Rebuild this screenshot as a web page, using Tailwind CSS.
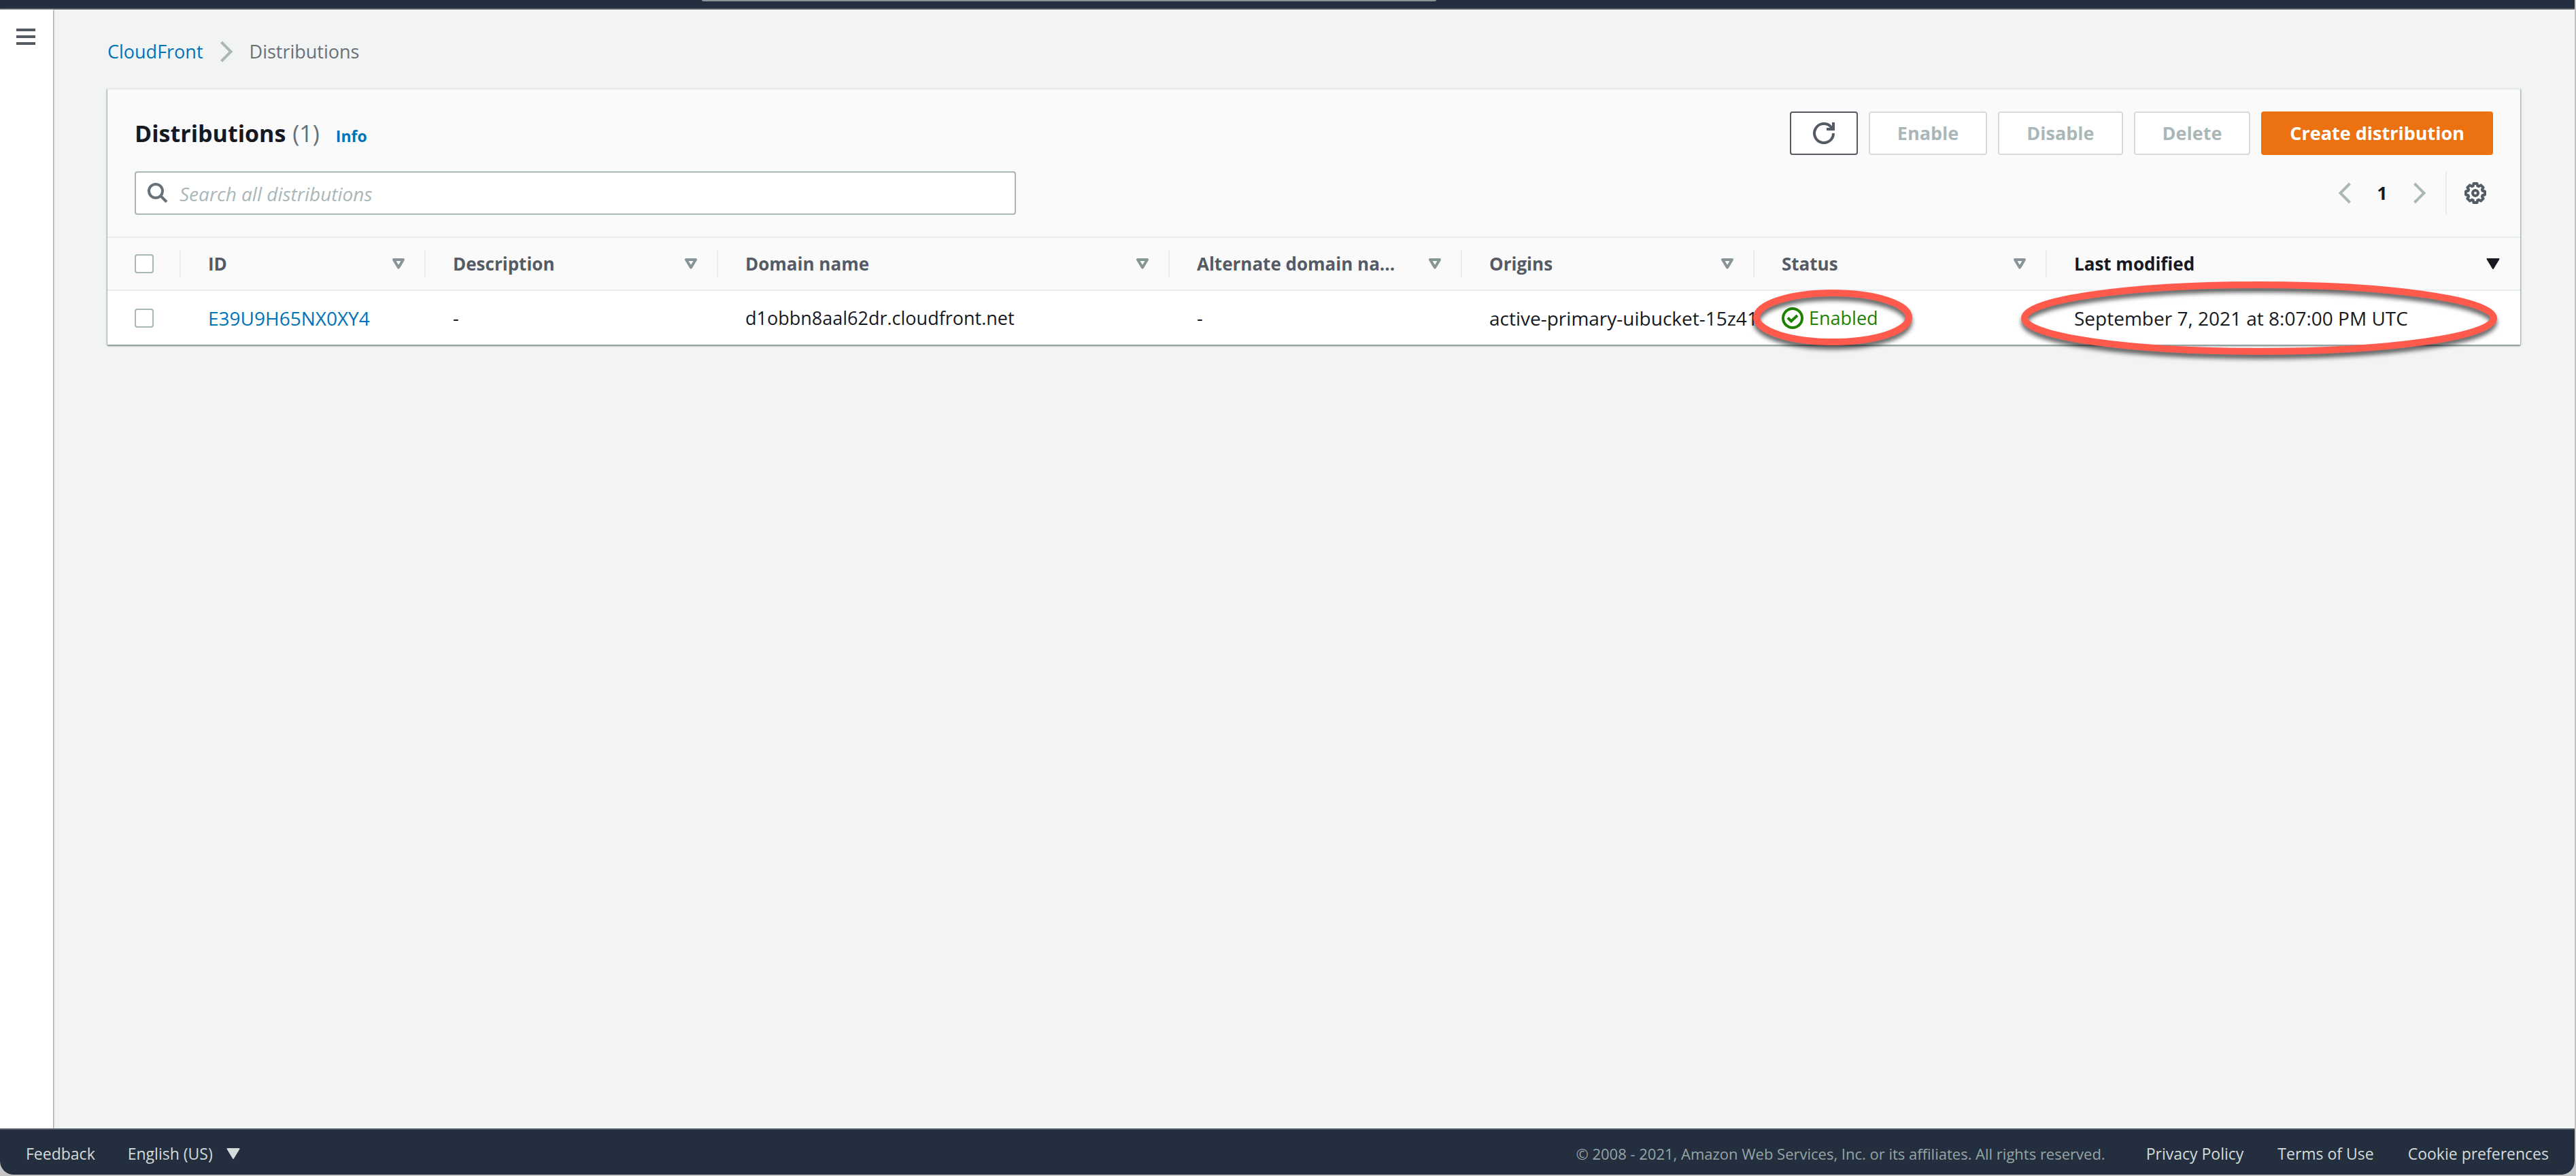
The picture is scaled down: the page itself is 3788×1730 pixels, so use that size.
<!DOCTYPE html>
<html lang="en">
<head>
<meta charset="utf-8">
<title>CloudFront Distributions</title>
<script src="https://cdn.jsdelivr.net/npm/@tailwindcss/browser@4"></script>
</head>
<body class="bg-[#c4c4c6] font-['Open_Sans','Noto_Sans',sans-serif] text-[27px] leading-9 text-[#16191f]">
<svg class="hidden" aria-hidden="true">
  <symbol id="sort" viewBox="0 0 20 16"><path d="M3 2h14l-7 11.500z" fill="none" stroke="currentColor" stroke-width="4" stroke-linejoin="round"/></symbol>
  <symbol id="sort-filled" viewBox="0 0 20 16"><path d="M1.500 1h17L10 15z" fill="currentColor" stroke="currentColor" stroke-width="2" stroke-linejoin="round"/></symbol>
  <symbol id="chevron" viewBox="0 0 20 32"><path d="M2.500 2l14 14-14 14" fill="none" stroke="currentColor" stroke-width="4"/></symbol>
</svg>
<div class="flex min-h-screen flex-col pr-0.5 pb-0.5">
  <div class="flex flex-1 flex-col overflow-hidden rounded-b-[20px] bg-[#f2f3f3]">
    <header class="flex h-3.5 justify-center border-b-2 border-[#545b64] bg-[#232f3e] pr-[642px]">
      <div class="h-0.5 w-[1080px] rounded-b-sm bg-[#879596]"></div>
    </header>

    <div class="flex flex-1">
      <nav class="w-[78px] shrink-0 bg-white px-6 pt-7 shadow-[1px_0_2px_#879596]">
        <button aria-label="Open navigation" class="flex w-7 flex-col gap-1.5">
          <span class="h-1 w-full bg-[#545b64]"></span>
          <span class="h-1 w-full bg-[#545b64]"></span>
          <span class="h-1 w-full bg-[#545b64]"></span>
        </button>
      </nav>

      <main class="min-w-0 flex-1 px-20 pt-11">
        <nav aria-label="Breadcrumb" class="flex items-center">
          <a href="#" class="text-[#0073bb]">CloudFront</a>
          <svg class="mx-6 h-8 w-5 text-[#aab7b8]"><use href="#chevron"/></svg>
          <span class="text-[#687078]">Distributions</span>
        </nav>

        <section class="mt-9 border-t-2 border-[#eaeded] bg-[#fafafa] shadow-[0_2px_2px_#879596,1px_1px_2px_#aab7b8,-1px_1px_2px_#aab7b8]">
          <div class="flex items-start justify-between px-10 pt-8">
            <h1 class="flex h-16 items-baseline pt-2 text-[34px] leading-12 font-bold">
              Distributions<span class="ml-2.5 font-normal text-[#687078]">(1)</span>
              <a href="#" class="ml-6 text-[23px] text-[#0073bb]">Info</a>
            </h1>
            <div class="flex gap-4 font-bold">
              <button aria-label="Refresh" class="flex h-16 w-[100px] items-center justify-center rounded-sm border-2 border-[#545b64] bg-white text-[#545b64]">
                <svg class="size-8" viewBox="0 0 32 32" fill="none" stroke="currentColor" stroke-width="4"><path d="M30 16A14 14 0 1 1 26.500 6.800L30 10"/><path d="M30 0v10H20"/></svg>
              </button>
              <button disabled class="h-16 rounded-sm border-2 border-[#d5dbdb] bg-white px-10 text-[#aab7b8]">Enable</button>
              <button disabled class="h-16 rounded-sm border-2 border-[#d5dbdb] bg-white px-10 text-[#aab7b8]">Disable</button>
              <button disabled class="h-16 rounded-sm border-2 border-[#d5dbdb] bg-white px-10 text-[#aab7b8]">Delete</button>
              <button class="h-16 rounded-sm bg-[#ec7211] px-[42px] text-white">Create distribution</button>
            </div>
          </div>

          <div class="flex items-center justify-between px-10 pt-6 pb-8">
            <label class="flex h-16 w-[1296px] items-center gap-4 rounded-sm border-2 border-[#aab7b8] bg-white px-4">
              <svg class="size-8 shrink-0 text-[#687078]" viewBox="0 0 32 32" fill="none" stroke="currentColor" stroke-width="4"><circle cx="13" cy="13" r="10"/><path d="M20 20l9 9"/></svg>
              <input type="search" aria-label="Search all distributions" placeholder="Search all distributions" class="min-w-0 flex-1 pt-0.5 text-[28px] outline-none placeholder:text-[#aab7b8] placeholder:italic">
            </label>
            <div class="flex items-center">
              <button aria-label="Previous page" disabled class="text-[#aab7b8]"><svg class="h-8 w-5 rotate-180"><use href="#chevron"/></svg></button>
              <button aria-current="page" class="w-[90px] font-bold">1</button>
              <button aria-label="Next page" disabled class="text-[#aab7b8]"><svg class="h-8 w-5"><use href="#chevron"/></svg></button>
              <span class="ml-7 h-16 w-0.5 bg-[#eaeded]"></span>
              <button aria-label="Settings" class="mr-2.5 ml-[26px] text-[#545b64]">
                <svg class="size-8" viewBox="0 0 32 32" fill="none" stroke="currentColor" stroke-width="4" stroke-linejoin="round"><path d="M13.500 2h5l.7 3.400 2 .8 2.900-1.900 3.600 3.600-1.900 2.900.8 2 3.400.7v5l-3.400.7-.8 2 1.900 2.900-3.600 3.600-2.900-1.900-2 .8-.7 3.400h-5l-.7-3.400-2-.8-2.900 1.900-3.600-3.600 1.900-2.900-.8-2L2 18.500v-5l3.400-.7.8-2-1.900-2.900 3.600-3.600 2.900 1.900 2-.8z"/><circle cx="16" cy="16" r="4"/></svg>
              </button>
            </div>
          </div>

          <table class="w-full table-fixed border-collapse text-left">
            <colgroup>
              <col class="w-[108px]"><col class="w-[360px]"><col class="w-[430px]"><col class="w-[664px]"><col class="w-[430px]"><col class="w-[430px]"><col class="w-[430px]"><col>
            </colgroup>
            <thead class="border-y-2 border-[#eaeded] text-[26px] text-[#545b64]">
              <tr class="h-[78px]">
                <th class="p-0"><div class="flex h-10 items-center border-r-2 border-[#eaeded] pl-10"><input type="checkbox" aria-label="Select all" class="size-7 appearance-none rounded-sm border-2 border-[#aab7b8] bg-white"></div></th>
                <th class="p-0"><div class="flex h-10 items-center justify-between border-r-2 border-[#eaeded] pr-7 pl-10">ID<svg class="h-4 w-5 shrink-0 text-[#879596]"><use href="#sort"/></svg></div></th>
                <th class="p-0"><div class="flex h-10 items-center justify-between border-r-2 border-[#eaeded] pr-7 pl-10">Description<svg class="h-4 w-5 shrink-0 text-[#879596]"><use href="#sort"/></svg></div></th>
                <th class="p-0"><div class="flex h-10 items-center justify-between border-r-2 border-[#eaeded] pr-7 pl-10">Domain name<svg class="h-4 w-5 shrink-0 text-[#879596]"><use href="#sort"/></svg></div></th>
                <th class="p-0"><div class="flex h-10 items-center justify-between border-r-2 border-[#eaeded] pr-7 pl-10"><span class="whitespace-nowrap">Alternate domain na...</span><svg class="h-4 w-5 shrink-0 text-[#879596]"><use href="#sort"/></svg></div></th>
                <th class="p-0"><div class="flex h-10 items-center justify-between border-r-2 border-[#eaeded] pr-7 pl-10">Origins<svg class="h-4 w-5 shrink-0 text-[#879596]"><use href="#sort"/></svg></div></th>
                <th class="p-0"><div class="flex h-10 items-center justify-between border-r-2 border-[#eaeded] pr-7 pl-10">Status<svg class="h-4 w-5 shrink-0 text-[#879596]"><use href="#sort"/></svg></div></th>
                <th class="p-0 text-[#16191f]"><div class="flex h-10 items-center justify-between pr-[30px] pl-10">Last modified<svg class="h-4 w-5 shrink-0"><use href="#sort-filled"/></svg></div></th>
              </tr>
            </thead>
            <tbody class="bg-white">
              <tr class="h-20">
                <td class="p-0"><div class="flex items-center pl-10"><input type="checkbox" aria-label="Select E39U9H65NX0XY4" class="size-7 appearance-none rounded-sm border-2 border-[#aab7b8] bg-white"></div></td>
                <td class="p-0 pl-10 text-[28px]"><a href="#" class="text-[#0073bb]">E39U9H65NX0XY4</a></td>
                <td class="p-0 pl-10">-</td>
                <td class="p-0 pl-10">d1obbn8aal62dr.cloudfront.net</td>
                <td class="p-0 pl-10">-</td>
                <td class="p-0 pl-10 text-[28px] whitespace-nowrap">active-primary-uibucket-15z41</td>
                <td class="relative p-0 pl-10">
                  <span class="flex items-center gap-2 text-[#1d8102]">
                    <svg class="size-8" viewBox="0 0 32 32" fill="none" stroke="currentColor" stroke-width="4"><circle cx="16" cy="16" r="14"/><path d="M9 15.500l5 5 9-8.500"/></svg>Enabled
                  </span>
                  <svg class="pointer-events-none absolute -top-0.5 -left-0.5 h-[82px] w-[234px] overflow-visible drop-shadow-[0_6px_3px_rgba(0,0,0,0.6)]" fill="none" stroke="#ff5a4c" stroke-width="10"><ellipse cx="117" cy="41" rx="112" ry="36"/></svg>
                </td>
                <td class="relative p-0 pl-10 text-[28px]">
                  September 7, 2021 at 8:07:00 PM UTC
                  <svg class="pointer-events-none absolute -top-3.5 -left-[38px] h-[108px] w-[700px] overflow-visible drop-shadow-[0_6px_3px_rgba(0,0,0,0.6)]" fill="none" stroke="#ff5a4c" stroke-width="10"><ellipse cx="350" cy="54" rx="345" ry="49"/></svg>
                </td>
              </tr>
            </tbody>
          </table>
        </section>
      </main>
    </div>

    <footer class="flex h-[68px] items-center justify-between border-t-2 border-[#545b64] bg-[#232f3e] px-[38px] pt-1 text-[23px] text-[#d5dbdb]">
      <div class="flex items-center gap-12">
        <a href="#">Feedback</a>
        <button class="flex items-center gap-5">English (US)<svg class="h-4 w-5"><use href="#sort-filled"/></svg></button>
      </div>
      <div class="flex items-center gap-[50px]">
        <span class="mr-2.5 text-[22px] text-[#95a5a6]">© 2008 - 2021, Amazon Web Services, Inc. or its affiliates. All rights reserved.</span>
        <a href="#">Privacy Policy</a>
        <a href="#">Terms of Use</a>
        <a href="#">Cookie preferences</a>
      </div>
    </footer>
  </div>
</div>
</body>
</html>
